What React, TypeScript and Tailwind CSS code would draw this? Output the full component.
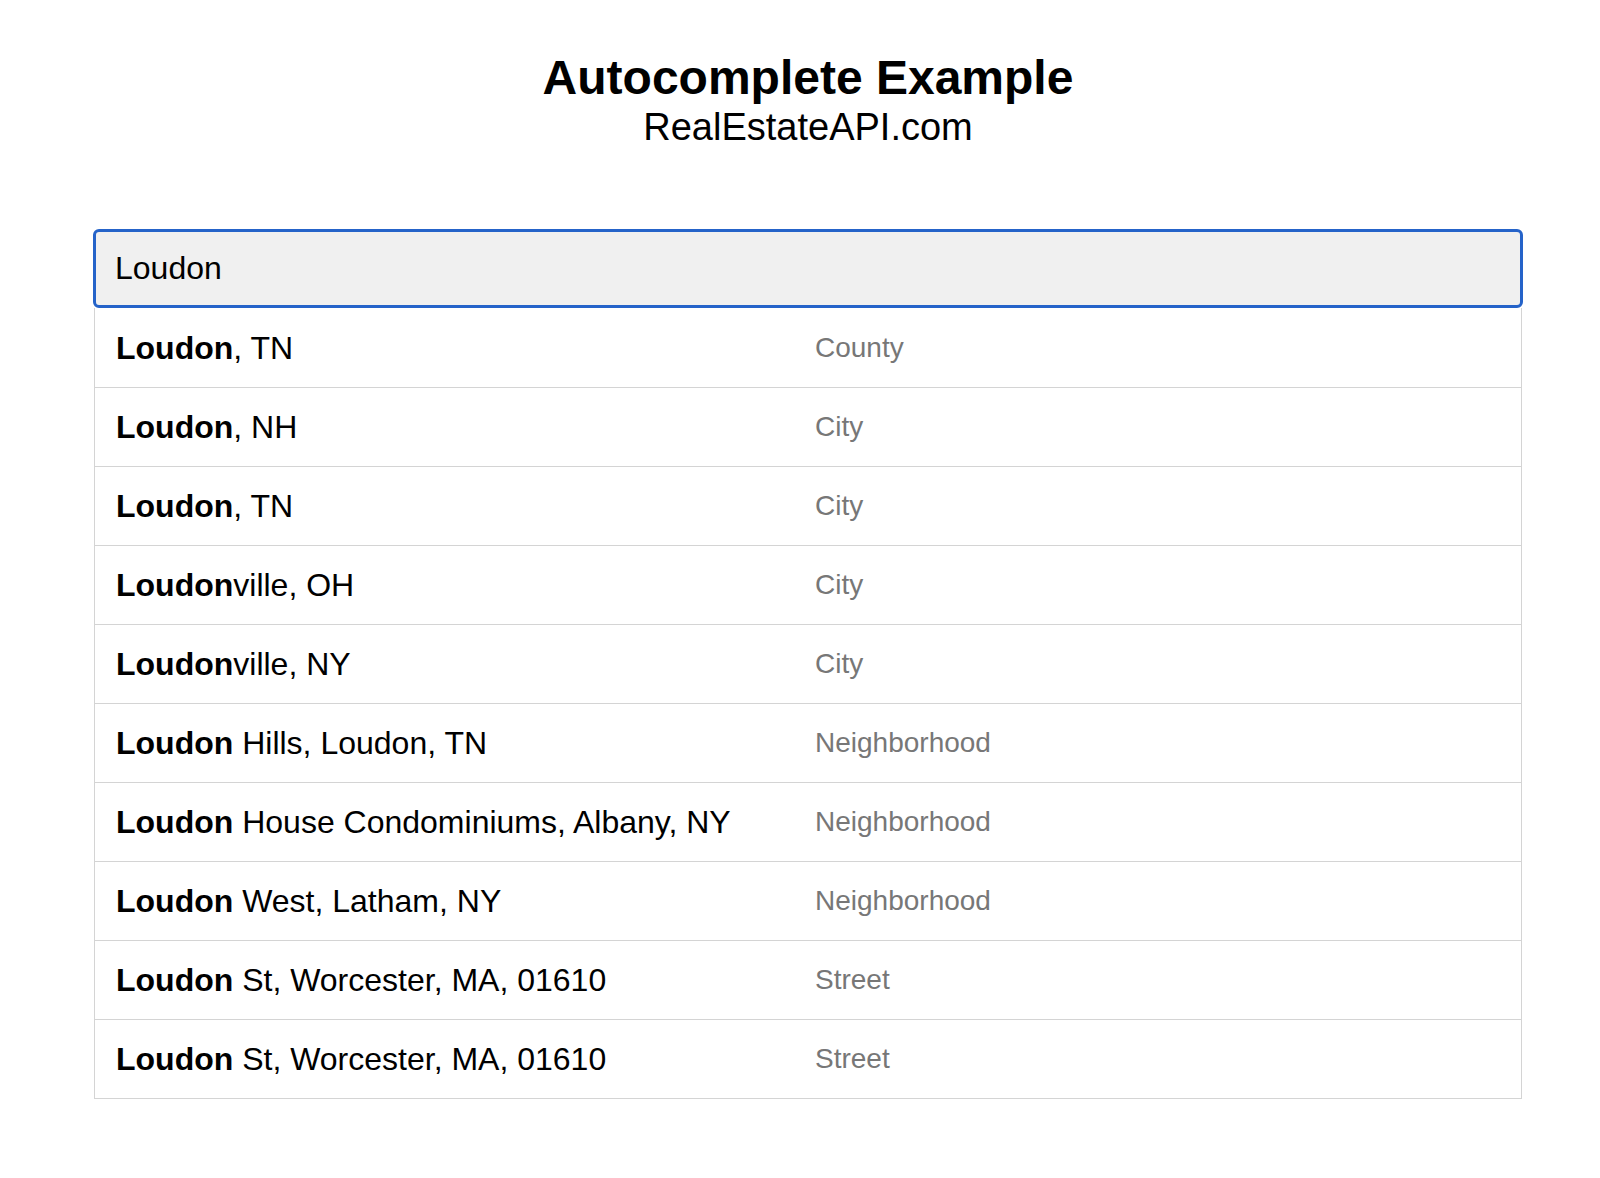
import { useState } from 'react'

type Suggestion = {
  match: string
  rest: string
  kind: string
}

const suggestions: Suggestion[] = [
  { match: 'Loudon', rest: ', TN', kind: 'County' },
  { match: 'Loudon', rest: ', NH', kind: 'City' },
  { match: 'Loudon', rest: ', TN', kind: 'City' },
  { match: 'Loudon', rest: 'ville, OH', kind: 'City' },
  { match: 'Loudon', rest: 'ville, NY', kind: 'City' },
  { match: 'Loudon', rest: ' Hills, Loudon, TN', kind: 'Neighborhood' },
  { match: 'Loudon', rest: ' House Condominiums, Albany, NY', kind: 'Neighborhood' },
  { match: 'Loudon', rest: ' West, Latham, NY', kind: 'Neighborhood' },
  { match: 'Loudon', rest: ' St, Worcester, MA, 01610', kind: 'Street' },
  { match: 'Loudon', rest: ' St, Worcester, MA, 01610', kind: 'Street' },
]

export default function App() {
  const [query, setQuery] = useState('Loudon')

  return (
    <div className="min-h-screen bg-white text-black font-['Liberation_Sans',Arial,sans-serif]">
      <div className="ml-[93px] mr-[77px] pt-[50px]">
        {/* Header */}
        <div className="text-center">
          <h1 className="text-[48px] font-bold leading-[56px]">Autocomplete Example</h1>
          <div className="text-[38px] leading-[42px]">RealEstateAPI.com</div>
        </div>

        {/* Search input */}
        <input
          value={query}
          onChange={(e) => setQuery(e.target.value)}
          className="block w-full h-[79px] mt-[81px] px-[19px] bg-[#f0f0f0] border-[3px] border-[#2563c9] rounded-[6px] text-[32px] outline-none"
        />

        {/* Suggestions */}
        <ul className="mx-px border-x border-b border-[#d4d4d4]">
          {suggestions.map((s, i) => (
            <li
              key={i}
              className="flex items-center h-[79px] px-[21px] border-t border-[#d4d4d4] first:border-t-0"
            >
              <div className="w-[699px] text-[32px]">
                <b>{s.match}</b>
                {s.rest}
              </div>
              <div className="text-[28px] text-[#777]">{s.kind}</div>
            </li>
          ))}
        </ul>
      </div>
    </div>
  )
}
